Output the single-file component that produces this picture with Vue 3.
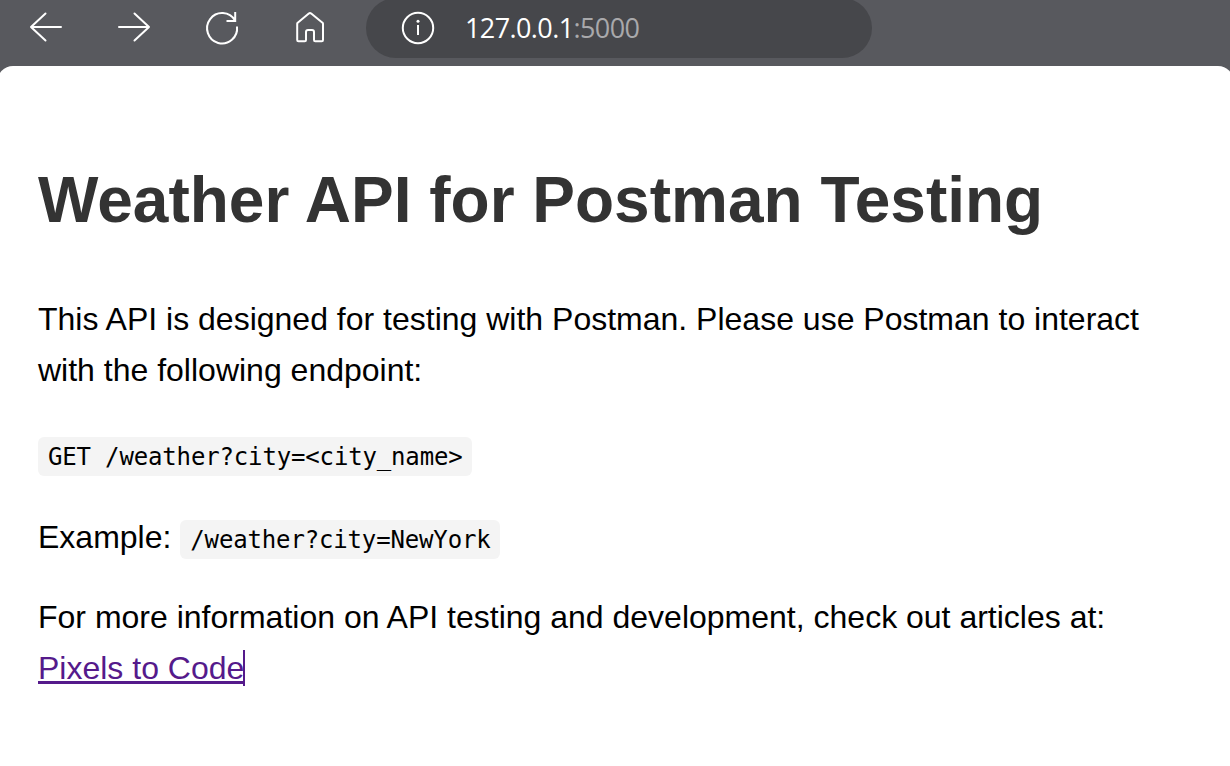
<script setup>
</script>

<template>
  <div class="window">
    <header class="toolbar">
      <nav class="controls">
        <svg viewBox="0 0 44 44"><path d="M37 22H7M21.500 8.500L7 22l14.500 13.500" /></svg>
        <svg viewBox="0 0 44 44"><path d="M7 22h30M22.500 8.500L37 22 22.500 35.500" /></svg>
        <svg viewBox="0 0 44 44"><path class="square" d="M37 21.500A15 15.200 0 1 1 35 15.500M35.200 7v9H26.500" /></svg>
        <svg viewBox="0 0 44 44"><path d="M9.200 18.800Q9.200 18.200 9.700 17.700L20.800 8.600Q22 7.600 23.200 8.600L34.500 17.700Q35 18.200 35 18.800V35Q35 36.300 33.700 36.300H27.300Q26 36.300 26 35V27Q26 25 24 25H20Q18 25 18 27V35Q18 36.300 16.700 36.300H10.500Q9.200 36.300 9.200 35Z" /></svg>
      </nav>
      <div class="address">
        <svg viewBox="0 0 34 34"><circle cx="17" cy="17" r="15.200" /><path class="stem" d="M17 14v10" /><circle class="dot" cx="17" cy="10.200" r="1.500" /></svg>
        <span class="url">127.0.0.1<span class="port">:5000</span></span>
      </div>
    </header>
    <main class="page">
      <h1>Weather API for Postman Testing</h1>
      <p class="intro">This API is designed for testing with Postman. Please use Postman to interact<br>with the following endpoint:</p>
      <p class="endpoint"><code>GET /weather?city=&lt;city_name&gt;</code></p>
      <p class="example"><span>Example:</span><code>/weather?city=NewYork</code></p>
      <p class="more">For more information on API testing and development, check out articles at:<br><a href="#">Pixels to Code</a><span class="caret"></span></p>
    </main>
  </div>
</template>

<style>
body { margin: 0; }
</style>

<style scoped>
.window { height: 766px; background: #58595e; overflow: hidden; }
.toolbar { display: flex; height: 66px; align-items: flex-start; overflow: hidden; }
.controls { display: flex; gap: 44px; padding: 5px 0 0 24px; width: 342px; box-sizing: border-box; }
svg { fill: none; stroke: #fff; stroke-width: 2; stroke-linecap: round; stroke-linejoin: round; }
.square { stroke-linecap: butt; stroke-linejoin: miter; }
.stem { stroke-linecap: butt; }
.dot { fill: #fff; stroke: none; }
.controls svg { width: 44px; height: 44px; flex: none; }
.address { margin: -2px 0 0 24px; width: 506px; height: 60px; box-sizing: border-box; padding-left: 35px; display: flex; align-items: center; border-radius: 30px; background: #46474b; }
.address svg { width: 34px; height: 34px; margin-right: 30px; }
.url { font: 27px/36px "Open Sans", sans-serif; letter-spacing: -0.6px; color: #fff; }
.port { color: #a9a9ab; }
.page { height: 700px; margin: 0 -4px 0 -3px; box-sizing: border-box; padding: 94px 41px 0; border-radius: 16px 16px 0 0; background: #fff; font: 32px/51.2px "Liberation Sans", Arial, sans-serif; color: #000; }
h1 { margin: 0; font-size: 64px; line-height: 80px; color: #333; white-space: nowrap; }
p { margin: 0; white-space: nowrap; }
.intro { margin-top: 54px; }
.endpoint { display: flex; margin-top: 40.6px; }
.example { display: flex; height: 51px; margin-top: 36px; }
.example span { margin-right: 9px; }
.example code { margin-top: 8px; }
.more { margin-top: 29px; }
code { display: block; height: 39px; line-height: 41px; padding: 0 9.9px; box-sizing: border-box; border-radius: 6px; background: #f4f4f4; font-family: "DejaVu Sans Mono", monospace; font-size: 24px; letter-spacing: -0.15px; }
a { color: #551a8b; text-decoration: underline; text-decoration-thickness: 3px; }
.caret { display: inline-block; width: 2px; height: 36px; margin-left: -1px; background: #551a8b; vertical-align: -7px; }
</style>
